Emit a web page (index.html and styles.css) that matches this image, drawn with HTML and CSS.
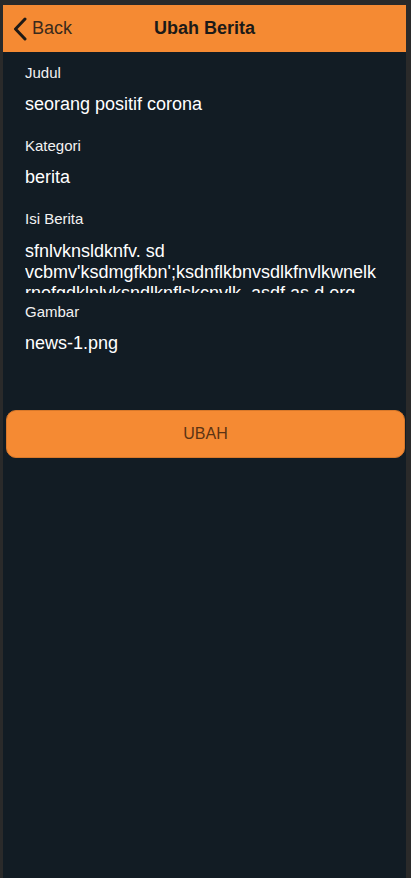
FILE: index.html
```html
<!DOCTYPE html>
<html lang="id">
<head>
<meta charset="utf-8">
<title>Ubah Berita</title>
<link rel="stylesheet" href="styles.css">
</head>
<body>
<div class="app">
  <header class="topbar">
    <div class="back">
      <svg class="chev" width="16" height="24" viewBox="0 0 16 24"><path d="M13 2 L3.5 12 L13 22" fill="none" stroke="#1f1a16" stroke-width="3" stroke-linecap="round" stroke-linejoin="round"/></svg>
      <span class="back-text">Back</span>
    </div>
    <div class="title">Ubah Berita</div>
  </header>
  <main class="form">
    <div class="field">
      <div class="label">Judul</div>
      <div class="value">seorang positif corona</div>
    </div>
    <div class="field">
      <div class="label">Kategori</div>
      <div class="value">berita</div>
    </div>
    <div class="field field-area">
      <div class="label">Isi Berita</div>
      <div class="value area">
        <div class="line">sfnlvknsldknfv. sd</div>
        <div class="line">vcbmv'ksdmgfkbn';ksdnflkbnvsdlkfnvlkwnelk</div>
        <div class="line">rnefgdklnlvksndlknflskcnvlk. asdf as d erg</div>
      </div>
    </div>
    <div class="field">
      <div class="label">Gambar</div>
      <div class="value">news-1.png</div>
    </div>
  </main>
  <button class="submit" type="button">UBAH</button>
</div>
</body>
</html>
```
FILE: styles.css
```css
html, body {
  margin: 0;
  padding: 0;
  background: #2a2a2a;
  height: 100%;
}
body {
  font-family: "Liberation Sans", Arial, sans-serif;
}
.app {
  margin: 5px 5px 0 3px;
  background: #121c24;
  min-height: 873px;
  display: flex;
  flex-direction: column;
}
.topbar {
  height: 47px;
  background: #f58a33;
  position: relative;
  display: flex;
  align-items: center;
  justify-content: center;
}
.back {
  position: absolute;
  left: 9px;
  top: 0;
  height: 47px;
  display: flex;
  align-items: center;
  gap: 4px;
}
.chev {
  display: block;
  margin-top: 1px;
}
.back-text {
  font-size: 18px;
  color: #3a2a1c;
}
.title {
  font-size: 18px;
  font-weight: bold;
  color: #1c1a18;
}
.form {
  padding: 12px 22px 0 22px;
  display: flex;
  flex-direction: column;
  gap: 22px;
}
.field {
  display: flex;
  flex-direction: column;
}
.label {
  font-size: 15px;
  line-height: 17px;
  color: #f2f2f2;
}
.value {
  font-size: 18px;
  line-height: 21px;
  color: #ffffff;
  margin-top: 13px;
}
.area {
  height: 52px;
  padding-top: 1px;
  overflow: hidden;
  margin-bottom: -12px;
}
.line {
  white-space: nowrap;
}
.submit {
  margin: 56px 1px 0 3px;
  height: 48px;
  border: 1px solid #d8782a;
  border-radius: 10px;
  background: #f58a33;
  color: #5c3414;
  font-family: "Liberation Sans", Arial, sans-serif;
  font-size: 16px;
  padding: 0;
}
```
